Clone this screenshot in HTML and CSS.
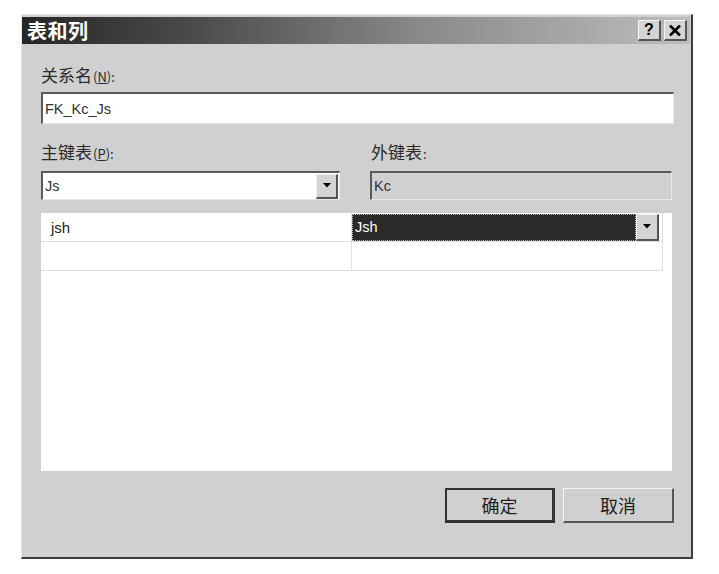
FILE: index.html
```html
<!DOCTYPE html>
<html lang="zh">
<head>
<meta charset="utf-8">
<title>表和列</title>
<link rel="stylesheet" href="styles.css">
</head>
<body>
<div class="dialog">
  <div class="titlebar">
    <span class="title">表和列</span>
    <div class="tbtns">
      <span class="tbtn">?</span>
      <span class="tbtn x">
        <svg width="12" height="11" viewBox="0 0 12 11"><path d="M1 0.5 L11 10.5 M11 0.5 L1 10.5" stroke="#000" stroke-width="2.6" fill="none"/></svg>
      </span>
    </div>
  </div>
  <div class="content">
    <div class="label">关系名<span class="acc">(<u>N</u>):</span></div>
    <div class="field name">FK_Kc_Js</div>
    <div class="cols">
      <div class="col left">
        <div class="label">主键表<span class="acc">(<u>P</u>):</span></div>
        <div class="field combo">
          <span class="val">Js</span>
          <span class="drop"><svg width="8" height="5" viewBox="0 0 8 5"><path d="M0 0 H8 L4 4.5 Z" fill="#000"/></svg></span>
        </div>
      </div>
      <div class="col right">
        <div class="label">外键表<span class="acc">:</span></div>
        <div class="field ro">Kc</div>
      </div>
    </div>
    <div class="grid">
      <div class="row">
        <div class="cell c1">jsh</div>
        <div class="cell c2 sel">
          <span class="selval">Jsh</span>
          <span class="drop gdrop"><svg width="8" height="5" viewBox="0 0 8 5"><path d="M0 0 H8 L4 4.5 Z" fill="#000"/></svg></span>
        </div>
      </div>
      <div class="row">
        <div class="cell c1"></div>
        <div class="cell c2"></div>
      </div>
    </div>
    <div class="buttons">
      <button class="btn default">确定</button>
      <button class="btn">取消</button>
    </div>
  </div>
</div>
</body>
</html>
```

FILE: styles.css
```css
* { box-sizing: border-box; }
html, body { margin: 0; padding: 0; background: #fff; }
body {
  font-family: "Liberation Sans", "Noto Sans CJK SC", sans-serif;
  color: #1a1a1a;
}
.dialog {
  margin: 14px 0 0 21px;
  width: 672px;
  height: 545px;
  background: #d0d0d0;
  border-left: 1px solid #e6e6e6;
  border-top: 1px solid #e6e6e6;
  border-right: 2px solid #3c3c3c;
  border-bottom: 2px solid #3c3c3c;
  padding: 2px 1px 0 0;
}
.titlebar {
  height: 27px;
  background: linear-gradient(to right, #262626 0%, #4a4a4a 25%, #8a8a8a 60%, #bdbdbd 100%);
  display: flex;
  align-items: center;
  justify-content: space-between;
  padding: 0 3px 0 5px;
}
.title {
  color: #fff;
  font-family: "Noto Sans CJK SC", sans-serif;
  font-weight: bold;
  font-size: 20px;
  line-height: 27px;
  letter-spacing: 0.5px;
}
.tbtns { display: flex; gap: 3px; }
.tbtn {
  width: 23px;
  height: 21px;
  background: #d4d4d4;
  border-top: 1px solid #f4f4f4;
  border-left: 1px solid #f4f4f4;
  border-right: 2px solid #555;
  border-bottom: 2px solid #555;
  display: flex;
  align-items: center;
  justify-content: center;
  font-family: "Liberation Sans", sans-serif;
  font-weight: bold;
  font-size: 16px;
  color: #000;
}
.content {
  padding: 22px 16px 0 19px;
}
.label {
  font-family: "Noto Sans CJK SC", sans-serif;
  font-size: 17px;
  line-height: 18px;
  height: 18px;
  color: #2a2a2a;
}
.acc { font-size: 13px; margin-left: 1px; }
.field {
  background: #fff;
  border-top: 2px solid #5a5a5a;
  border-left: 2px solid #5a5a5a;
  border-right: 1px solid #e8e8e8;
  border-bottom: 1px solid #e8e8e8;
  font-size: 14.5px;
  display: flex;
  align-items: center;
  padding-left: 2px;
  color: #333;
}
.name { margin-top: 8px; height: 32px; }
.cols {
  display: flex;
  margin-top: 19px;
  gap: 30px;
}
.col .field { margin-top: 10px; height: 29px; }
.left { width: 299px; }
.right { width: 302px; }
.right .label { padding-left: 1px; }
.ro { background: #d0d0d0; }
.combo { justify-content: space-between; padding-right: 1px; }
.drop {
  width: 22px;
  height: 25px;
  background: #d4d4d4;
  border-top: 1px solid #f0f0f0;
  border-left: 1px solid #f0f0f0;
  border-right: 2px solid #555;
  border-bottom: 2px solid #555;
  display: flex;
  align-items: center;
  justify-content: center;
}
.grid {
  margin-top: 13px;
  width: 631px;
  height: 258px;
  background: #fff;
}
.row { display: flex; height: 29px; }
.cell {
  border-bottom: 1px solid #e0e0e0;
  border-right: 1px solid #e0e0e0;
  font-size: 15px;
  display: flex;
  align-items: center;
  color: #222;
}
.c1 { width: 311px; padding-left: 10px; }
.c2 { width: 311px; }
.sel { padding: 1px 0 1px 0; gap: 0; }
.selval {
  flex: 1;
  height: 27px;
  background: #2a2a2a;
  color: #fff;
  outline: 1px dotted #bbb;
  outline-offset: -1px;
  display: flex;
  align-items: center;
  padding-left: 3px;
  font-size: 14.5px;
}
.gdrop { width: 23px; height: 27px; margin-right: 3px; }
.buttons {
  display: flex;
  justify-content: flex-end;
  gap: 8px;
  margin-top: 17px;
}
.btn {
  width: 111px;
  height: 35px;
  background: #d0d0d0;
  font-family: "Noto Sans CJK SC", sans-serif;
  font-size: 18px;
  color: #222;
  padding: 0;
  border-top: 1px solid #f2f2f2;
  border-left: 1px solid #f2f2f2;
  border-right: 2px solid #555;
  border-bottom: 2px solid #555;
}
.default {
  width: 110px;
  border: 2px solid #333;
  border-right-width: 3px;
  border-bottom-width: 3px;
}
```
